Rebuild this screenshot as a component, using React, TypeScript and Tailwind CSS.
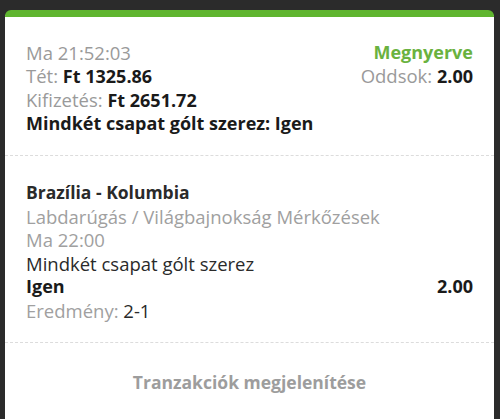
import React from 'react';

const font = { fontFamily: '"Open Sans", "Liberation Sans", sans-serif' };

export default function App() {
  return (
    <div className="min-h-screen bg-[#2b2b2b] pt-[10px] pl-[5px]" style={font}>
      <div className="w-[489px] bg-white rounded-t-[6px] border-t-[7px] border-[#5fb52f] overflow-hidden">
        {/* bet summary */}
        <div className="flex justify-between px-[21px] pt-[24px] pb-[20px] text-[18px] leading-[23px]">
          <div>
            <div className="text-[18.5px] text-[#9a9a9a]">Ma 21:52:03</div>
            <div className="text-[18.5px] text-[#9a9a9a]">
              Tét: <span className="text-[18px] font-bold text-[#1a1a1a]">Ft 1325.86</span>
            </div>
            <div className="text-[18.5px] text-[#9a9a9a]">
              Kifizetés: <span className="text-[18px] font-bold text-[#1a1a1a]">Ft 2651.72</span>
            </div>
            <div className="font-bold text-[#1a1a1a]">Mindkét csapat gólt szerez: Igen</div>
          </div>
          <div className="text-right">
            <div className="font-bold text-[#6ab23f]">Megnyerve</div>
            <div className="text-[18.5px] text-[#9a9a9a]">
              Oddsok: <span className="text-[18px] font-bold text-[#1a1a1a]">2.00</span>
            </div>
          </div>
        </div>

        <div className="border-t border-dashed border-[#dcdcdc]" />

        {/* event */}
        <div className="px-[21px] pt-[24px] pb-[20px] text-[18.5px] leading-[23.4px]">
          <div className="font-bold text-[17.5px] leading-[25px] text-[#2a2a2a]">Brazília - Kolumbia</div>
          <div className="text-[#a0a0a0]">Labdarúgás / Világbajnokság Mérkőzések</div>
          <div className="text-[#a0a0a0]">Ma 22:00</div>
          <div className="text-[#2a2a2a]">Mindkét csapat gólt szerez</div>
          <div className="flex justify-between text-[18px] font-bold text-[#1a1a1a]">
            <span>Igen</span>
            <span>2.00</span>
          </div>
          <div className="text-[#a0a0a0]">
            Eredmény: <span className="text-[#2a2a2a]">2-1</span>
          </div>
        </div>

        <div className="border-t border-dashed border-[#dcdcdc]" />

        <div className="py-[26px] text-center text-[17.5px] font-bold text-[#9d9d9d]">
          Tranzakciók megjelenítése
        </div>
      </div>
    </div>
  );
}
